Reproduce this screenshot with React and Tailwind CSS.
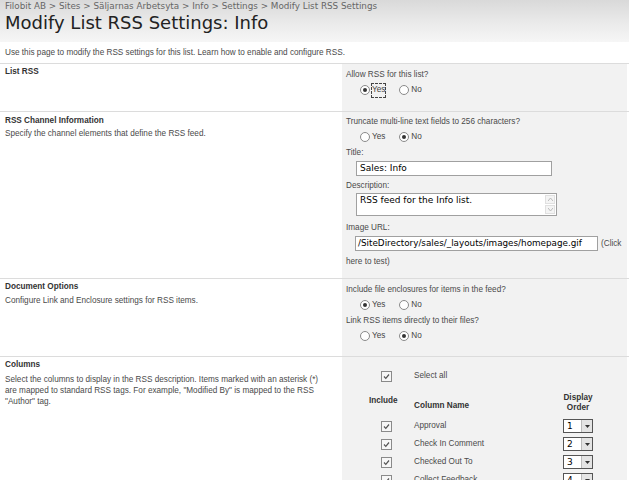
import React from "react";

const body = { fontFamily: '"Liberation Sans", Arial, sans-serif' };
const verd = { fontFamily: '"DejaVu Sans", Verdana, sans-serif' };

function Radio({ checked, label, focus }) {
  return (
    <span className="inline-flex items-center mr-[14px]">
      <span className="w-[10px] h-[10px] rounded-full border border-[#8a8a8a] bg-white flex items-center justify-center">
        {checked && <span className="w-[4px] h-[4px] rounded-full bg-[#333]" />}
      </span>
      <span className={"ml-[2px] text-[8.2px] text-[#444] " + (focus ? "outline outline-1 outline-dashed outline-[#444]" : "")}>{label}</span>
    </span>
  );
}

function Check() {
  return (
    <span className="w-[11px] h-[11px] border border-[#8a8a8a] bg-[#f7f7f7] inline-flex items-center justify-center">
      <svg width="7" height="7" viewBox="0 0 7 7">
        <path d="M1 3.5 L2.8 5.3 L6 1.5" stroke="#555" strokeWidth="1.2" fill="none" />
      </svg>
    </span>
  );
}

function Sel({ n }) {
  return (
    <span className="inline-flex w-[30px] h-[14px] border border-[#555] bg-white items-stretch">
      <span className="flex-1 text-[9px] text-black pl-[3px] leading-[12px]" style={verd}>{n}</span>
      <span className="w-[11px] bg-[#e4e4e4] border-l border-[#bbb] flex items-center justify-center">
        <svg width="5" height="3" viewBox="0 0 5 3"><path d="M0 0 H5 L2.5 3 Z" fill="#333" /></svg>
      </span>
    </span>
  );
}

export default function App() {
  const cols = [
    ["Approval", 1],
    ["Check In Comment", 2],
    ["Checked Out To", 3],
    ["Collect Feedback", 4],
  ];
  return (
    <div className="w-[629px] h-[480px] overflow-hidden bg-white text-[#4a4a4a]" style={body}>
      <div className="h-[42px] pl-[5px] bg-gradient-to-b from-[#d9d9d9] via-[#e9e9e9] to-[#f6f6f6]">
        <div className="text-[8.8px] leading-[10px] pt-[1px] text-[#666] whitespace-nowrap" style={verd}>
          Filobit AB &gt; Sites &gt; Säljarnas Arbetsyta &gt; Info &gt; Settings &gt; Modify List RSS Settings
        </div>
        <div className="text-[18px] leading-[21px] mt-[1px] text-[#222] whitespace-nowrap" style={verd}>Modify List RSS Settings: Info</div>
      </div>
      <div className="pl-[5px] pt-[5px] h-[21px] text-[8.2px] leading-[11px]">
        Use this page to modify the RSS settings for this list. Learn how to enable and configure RSS.
      </div>

      {/* Row 1 */}
      <div className="flex border-t border-[#dcdcdc] h-[48px]">
        <div className="w-[342px] shrink-0 pl-[5px] pt-[2px]">
          <div className="font-bold text-[8.2px] text-[#333]">List RSS</div>
        </div>
        <div className="flex-1 min-w-0 mr-[2px] bg-[#f2f2f2] pl-[4px] pt-[5px] text-[8.2px]">
          <div>Allow RSS for this list?</div>
          <div className="pl-[14px] mt-[3px] flex"><Radio checked label="Yes" focus /><Radio label="No" /></div>
        </div>
      </div>

      {/* Row 2 */}
      <div className="flex border-t border-[#dcdcdc] h-[167px]">
        <div className="w-[342px] shrink-0 pl-[5px] pt-[3px]">
          <div className="font-bold text-[8.2px] text-[#333]">RSS Channel Information</div>
          <div className="text-[8.2px] mt-[1px]">Specify the channel elements that define the RSS feed.</div>
        </div>
        <div className="flex-1 min-w-0 mr-[2px] bg-[#f2f2f2] pl-[4px] pt-[4px] text-[8.2px]">
          <div>Truncate multi-line text fields to 256 characters?</div>
          <div className="pl-[14px] mt-[3px] flex"><Radio label="Yes" /><Radio checked label="No" /></div>
          <div className="mt-[3px]">Title:</div>
          <div className="pl-[10px] mt-[2px]">
            <div className="w-[196px] h-[15px] border border-[#a0a0a0] bg-white text-[9px] text-black pl-[3px] leading-[13px]" style={verd}>Sales: Info</div>
          </div>
          <div className="mt-[4px]">Description:</div>
          <div className="pl-[10px] mt-[1px]">
            <div className="w-[201px] h-[23px] border border-[#a0a0a0] bg-white flex">
              <div className="flex-1 text-[9px] text-black pl-[3px] leading-[13px]" style={verd}>RSS feed for the Info list.</div>
              <div className="w-[11px] flex flex-col justify-between py-[1px] pr-[1px]">
                <span className="h-[9px] bg-[#f4f4f4] border border-[#e0e0e0] flex items-center justify-center"><svg width="5" height="3" viewBox="0 0 5 3"><path d="M0 3 L2.5 0 L5 3" stroke="#bbb" fill="none"/></svg></span>
                <span className="h-[9px] bg-[#f4f4f4] border border-[#e0e0e0] flex items-center justify-center"><svg width="5" height="3" viewBox="0 0 5 3"><path d="M0 0 L2.5 3 L5 0" stroke="#bbb" fill="none"/></svg></span>
              </div>
            </div>
          </div>
          <div className="mt-[6px]">Image URL:</div>
          <div className="pl-[9px] mt-[2px] flex items-start">
            <div className="w-[243px] h-[15px] border border-[#a0a0a0] bg-white text-[8.8px] text-black pl-[2px] leading-[13px] whitespace-nowrap overflow-hidden" style={verd}>/SiteDirectory/sales/_layouts/images/homepage.gif</div>
            <span className="ml-[3px] mt-[2px]">(Click</span>
          </div>
          <div className="mt-[5px]">here to test)</div>
        </div>
      </div>

      {/* Row 3 */}
      <div className="flex border-t border-[#dcdcdc] h-[78px]">
        <div className="w-[342px] shrink-0 pl-[5px] pt-[2px]">
          <div className="font-bold text-[8.2px] text-[#333]">Document Options</div>
          <div className="text-[8.2px] mt-[2px]">Configure Link and Enclosure settings for RSS items.</div>
        </div>
        <div className="flex-1 min-w-0 mr-[2px] bg-[#f2f2f2] pl-[4px] pt-[5px] text-[8.2px]">
          <div>Include file enclosures for items in the feed?</div>
          <div className="pl-[14px] mt-[3px] flex"><Radio checked label="Yes" /><Radio label="No" /></div>
          <div className="mt-[3px]">Link RSS items directly to their files?</div>
          <div className="pl-[14px] mt-[3px] flex"><Radio label="Yes" /><Radio checked label="No" /></div>
        </div>
      </div>

      {/* Row 4 */}
      <div className="flex border-t border-[#dcdcdc] h-[130px]">
        <div className="w-[342px] shrink-0 pl-[5px] pt-[2px]">
          <div className="font-bold text-[8.2px] text-[#333]">Columns</div>
          <div className="text-[8.2px] mt-[3px] leading-[11px] pr-[12px]">
            Select the columns to display in the RSS description. Items marked with an asterisk (*) are mapped to standard RSS tags. For example, "Modified By" is mapped to the RSS "Author" tag.
          </div>
        </div>
        <div className="flex-1 min-w-0 mr-[2px] bg-[#f2f2f2] pt-[13px] text-[8.2px]">
          <div className="flex items-center h-[12px]">
            <div className="w-[72px] flex justify-end pr-[22px]"><Check /></div>
            <span>Select all</span>
          </div>
          <div className="flex mt-[11px] h-[24px] font-bold text-[#333]">
            <div className="w-[72px] pl-[27px] pt-[2px]">Include</div>
            <div className="w-[134px] pt-[7px]">Column Name</div>
            <div className="w-[60px] text-center leading-[10px]">Display<br />Order</div>
          </div>
          {cols.map(([name, n]) => (
            <div key={name} className="flex items-center h-[18px]">
              <div className="w-[72px] flex justify-end pr-[22px]"><Check /></div>
              <div className="w-[134px]">{name}</div>
              <div className="w-[60px] flex justify-center"><Sel n={n} /></div>
            </div>
          ))}
        </div>
      </div>
    </div>
  );
}
